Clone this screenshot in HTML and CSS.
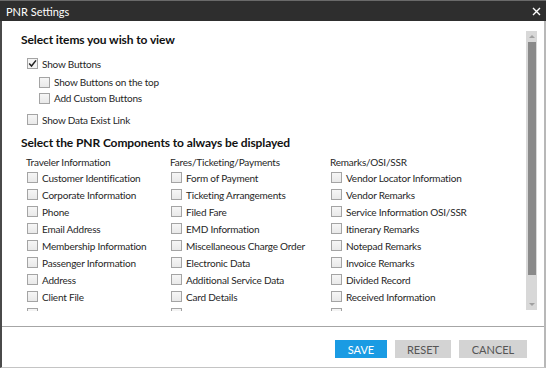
FILE: index.html
```html
<!DOCTYPE html>
<html lang="en">
<head>
  <meta charset="utf-8">
  <title>PNR Settings</title>
  <link rel="stylesheet" href="styles.css">
</head>
<body>
  <div class="dialog">
    <div class="titlebar">
      <span class="title">PNR Settings</span>
      <svg class="close" width="9" height="9" viewBox="0 0 9 9"><path d="M1 1 L8 8 M8 1 L1 8" stroke="#fff" stroke-width="1.4" fill="none"/></svg>
    </div>

    <div class="scroll">
      <div class="content">
        <h3 class="heading first">Select items you wish to view</h3>
        <div class="opts">
          <div class="item"><span class="box checked"><svg width="9" height="9" viewBox="0 0 9 9"><path d="M1.2 4.6 L3.5 7 L8 1.4" stroke="#222" stroke-width="1.5" fill="none"/></svg></span>Show Buttons</div>
          <div class="sub">
            <div class="item"><span class="box"></span>Show Buttons on the top</div>
            <div class="item"><span class="box"></span>Add Custom Buttons</div>
          </div>
          <div class="item gap"><span class="box"></span>Show Data Exist Link</div>
        </div>

        <h3 class="heading">Select the PNR Components to always be displayed</h3>
        <div class="cols">
          <div class="col">
            <div class="col-title">Traveler Information</div>
            <div class="item"><span class="box"></span>Customer Identification</div>
            <div class="item"><span class="box"></span>Corporate Information</div>
            <div class="item"><span class="box"></span>Phone</div>
            <div class="item"><span class="box"></span>Email Address</div>
            <div class="item"><span class="box"></span>Membership Information</div>
            <div class="item"><span class="box"></span>Passenger Information</div>
            <div class="item"><span class="box"></span>Address</div>
            <div class="item"><span class="box"></span>Client File</div>
            <div class="item"><span class="box"></span>Seat Information</div>
          </div>
          <div class="col">
            <div class="col-title">Fares/Ticketing/Payments</div>
            <div class="item"><span class="box"></span>Form of Payment</div>
            <div class="item"><span class="box"></span>Ticketing Arrangements</div>
            <div class="item"><span class="box"></span>Filed Fare</div>
            <div class="item"><span class="box"></span>EMD Information</div>
            <div class="item"><span class="box"></span>Miscellaneous Charge Order</div>
            <div class="item"><span class="box"></span>Electronic Data</div>
            <div class="item"><span class="box"></span>Additional Service Data</div>
            <div class="item"><span class="box"></span>Card Details</div>
            <div class="item"><span class="box"></span>TINS Data</div>
          </div>
          <div class="col">
            <div class="col-title">Remarks/OSI/SSR</div>
            <div class="item"><span class="box"></span>Vendor Locator Information</div>
            <div class="item"><span class="box"></span>Vendor Remarks</div>
            <div class="item"><span class="box"></span>Service Information OSI/SSR</div>
            <div class="item"><span class="box"></span>Itinerary Remarks</div>
            <div class="item"><span class="box"></span>Notepad Remarks</div>
            <div class="item"><span class="box"></span>Invoice Remarks</div>
            <div class="item"><span class="box"></span>Divided Record</div>
            <div class="item"><span class="box"></span>Received Information</div>
            <div class="item"><span class="box"></span>System Checks</div>
          </div>
        </div>
      </div>

      <div class="scrollbar">
        <div class="arrow up"></div>
        <div class="thumb"></div>
        <div class="arrow down"></div>
      </div>
    </div>

    <div class="footer">
      <button class="btn primary">SAVE</button>
      <button class="btn">RESET</button>
      <button class="btn">CANCEL</button>
    </div>
  </div>
</body>
</html>
```

FILE: styles.css
```css
body {
  margin: 0;
  font-family: Lato, "Open Sans", sans-serif;
  background: #ffffff;
}

.dialog {
  width: 546px;
  height: 368px;
  box-sizing: border-box;
  border-left: 2px solid #4a4a4a;
  border-right: 2px solid #b8b8b8;
  border-bottom: 1px solid #c4c4c4;
  display: flex;
  flex-direction: column;
  background: #ffffff;
}

/* title bar */
.titlebar {
  height: 21px;
  background: #2e2e2e;
  border-top: 1px solid #6a6a6a;
  box-sizing: border-box;
  margin-left: -2px;
  margin-right: -2px;
  padding: 0 5px 0 6px;
  display: flex;
  align-items: center;
  justify-content: space-between;
  flex-shrink: 0;
}

.title {
  color: #ffffff;
  font-size: 11px;
}

.close {
  margin-top: 1px;
}

/* scrolling area */
.scroll {
  height: 290px;
  flex-shrink: 0;
  overflow: hidden;
  display: flex;
}

.content {
  flex: 1;
  padding-left: 19px;
  padding-top: 11px;
}

.heading {
  font-size: 12px;
  font-weight: bold;
  color: #111;
  margin: 0;
  line-height: 15px;
  letter-spacing: -0.1px;
}

.opts {
  padding-left: 6px;
  padding-top: 8px;
  margin-bottom: 7px;
}

.sub {
  padding-left: 12px;
  margin-top: 2px;
}

.item {
  height: 17px;
  display: flex;
  align-items: center;
  font-size: 10px;
  letter-spacing: -0.2px;
  color: #262626;
  white-space: nowrap;
}

.sub .item {
  height: 16px;
}

.item.gap {
  margin-top: 5px;
}

.box {
  width: 11px;
  height: 11px;
  box-sizing: border-box;
  border: 1px solid #a4a4a4;
  background: linear-gradient(#f6f6f6, #e9e9e9);
  margin-right: 4px;
  flex-shrink: 0;
  display: flex;
  align-items: center;
  justify-content: center;
}

.box.checked {
  background: #f4f4f4;
}

.cols {
  display: grid;
  grid-template-columns: 144px 160px 1fr;
  padding-left: 5px;
  margin-top: 5px;
}

.col-title {
  font-size: 10px;
  letter-spacing: -0.2px;
  color: #262626;
  height: 14px;
  line-height: 14px;
}

.col .item {
  padding-left: 1px;
}

/* custom scrollbar */
.scrollbar {
  width: 11px;
  margin: 10px 7px 0 0;
  height: 279px;
  background: #d8d8d8;
  display: flex;
  flex-direction: column;
  align-items: center;
}

.arrow {
  height: 11px;
  width: 11px;
  display: flex;
  align-items: center;
  justify-content: center;
}

.arrow.up::before {
  content: '';
  border-left: 3px solid transparent;
  border-right: 3px solid transparent;
  border-bottom: 3px solid #a0a0a0;
}

.arrow.down::before {
  content: '';
  border-left: 3px solid transparent;
  border-right: 3px solid transparent;
  border-top: 3px solid #a0a0a0;
}

.thumb {
  width: 8px;
  height: 233px;
  background: #8a8a8a;
  margin-bottom: auto;
}

/* footer */
.footer {
  margin-top: 15px;
  border-top: 1px solid #a6a6a6;
  flex: 1;
  display: flex;
  justify-content: flex-end;
  align-items: flex-start;
  padding: 13px 17px 0 0;
  gap: 8px;
}

.btn {
  height: 18px;
  border: none;
  background: #d3d3d3;
  color: #555;
  font-family: Lato, "Open Sans", sans-serif;
  font-size: 11px;
  padding: 0;
  cursor: pointer;
}

.btn.primary {
  background: #1a9be3;
  color: #ffffff;
  width: 52px;
}

.btn:nth-child(2) {
  width: 56px;
}

.btn:nth-child(3) {
  width: 68px;
}
```
